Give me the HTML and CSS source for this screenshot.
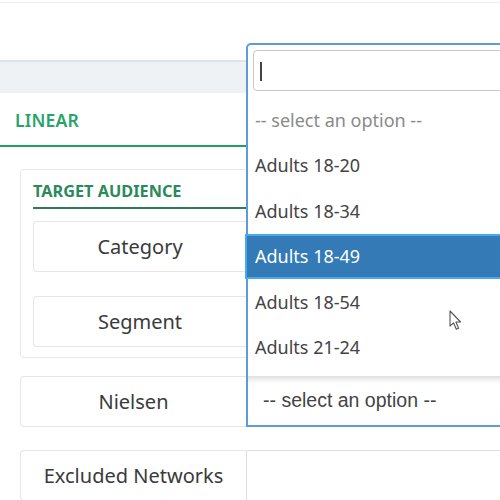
FILE: index.html
```html
<!DOCTYPE html>
<html>
<head>
<meta charset="utf-8">
<link rel="stylesheet" href="styles.css">
</head>
<body>
<div class="page">
  <div class="topbar"></div>
  <div class="band"></div>
  <div class="tabs"><div class="tab">LINEAR</div></div>
  <div class="content">
    <div class="card">
      <div class="card-title">TARGET AUDIENCE</div>
      <div class="row">
        <div class="label">Category</div>
        <div class="field"></div>
      </div>
      <div class="row">
        <div class="label">Segment</div>
        <div class="field"></div>
      </div>
    </div>
    <div class="row outer">
      <div class="label">Nielsen</div>
      <div class="field select-open">
        <span class="sel-text">-- select an option --</span>
        <div class="dropdown">
          <div class="search"><span class="caret"></span></div>
          <ul class="options">
            <li class="placeholder">-- select an option --</li>
            <li>Adults 18-20</li>
            <li>Adults 18-34</li>
            <li class="active">Adults 18-49</li>
            <li>Adults 18-54</li>
            <li>Adults 21-24</li>
          </ul>
          <svg class="pointer" width="14" height="22" viewBox="0 0 14 22">
            <path d="M1 1 L1 16 L4.5 12.8 L7.3 19.3 L9.6 18.3 L6.9 12 L11.6 12 Z" fill="#fff" stroke="#555" stroke-width="1.1" stroke-linejoin="round"/>
          </svg>
        </div>
      </div>
    </div>
    <div class="row outer">
      <div class="label">Excluded Networks</div>
      <div class="field plain"></div>
    </div>
  </div>
</div>
</body>
</html>
```

FILE: styles.css
```css
html, body {
  margin: 0;
  padding: 0;
  overflow: hidden;
  background: #fff;
}
.page {
  width: 760px;
  height: 500px;
  font-family: "Noto Sans", "Open Sans", sans-serif;
  color: #333;
}
.topbar {
  height: 2px;
  border-bottom: 1px solid #eceeef;
}
.band {
  margin-top: 57px;
  height: 31px;
  background: #eef2f5;
  border-top: 2px solid #e1e4e6;
}
.tabs {
  height: 52px;
  border-bottom: 2px solid #22a061;
  display: flex;
  align-items: center;
}
.tab {
  padding-left: 15px;
  font-size: 17.5px;
  font-weight: 600;
  color: #27a46a;
  letter-spacing: 0.2px;
  margin-top: 2px;
}
.content {
  padding: 22px 0 0 20px;
  display: flex;
  flex-direction: column;
  gap: 18px;
}
.card {
  border: 1px solid #e8e8e8;
  border-radius: 4px;
  padding: 11px 12px 10px 12px;
  display: flex;
  flex-direction: column;
  gap: 24px;
}
.card-title {
  font-size: 16.3px;
  line-height: 21px;
  font-weight: 700;
  color: #2b8a5c;
  padding-bottom: 5px;
  border-bottom: 2px solid #2e7d58;
  margin-bottom: -12px;
  width: 213px;
  white-space: nowrap;
}
.row {
  display: flex;
  height: 51px;
}
.label {
  box-sizing: border-box;
  width: 213px;
  flex: none;
  border: 1px solid #e6e6e6;
  border-right: none;
  border-radius: 4px 0 0 4px;
  display: flex;
  align-items: center;
  justify-content: center;
  font-size: 20px;
  color: #3a3a3a;
}
.outer .label {
  width: 226px;
}
.outer + .outer {
  margin-top: 5px;
}
.field {
  flex: 1;
  box-sizing: border-box;
  border: 1px solid #e0e0e0;
}
.field.plain {
  border-radius: 0 4px 4px 0;
}
.select-open {
  position: relative;
  border: 2px solid #5c9dd8;
  border-top: none;
  box-shadow: inset 0 7px 7px -5px rgba(0, 0, 0, 0.18);
  display: flex;
  align-items: center;
  padding-left: 15px;
}
.sel-text {
  font-family: "Liberation Sans", Arial, sans-serif;
  font-size: 19.5px;
  color: #444;
}
.dropdown {
  position: absolute;
  left: -2px;
  right: -2px;
  bottom: 100%;
  height: 333px;
  box-sizing: border-box;
  border: 2px solid #5c9dd8;
  border-bottom: none;
  border-radius: 5px 5px 0 0;
  background: #fff;
  padding: 5px 0 0 0;
}
.search {
  margin: 0 0 0 5px;
  height: 41px;
  box-sizing: border-box;
  border: 1px solid #c8c8c8;
  border-radius: 4px;
  position: relative;
}
.caret {
  position: absolute;
  left: 6px;
  top: 11px;
  width: 2px;
  height: 19px;
  background: #444;
}
.options {
  list-style: none;
  margin: 6px 0 0 0;
  padding: 0;
}
.options li {
  height: 45.5px;
  box-sizing: border-box;
  display: flex;
  align-items: center;
  padding-left: 7px;
  font-size: 18px;
  color: #444;
  white-space: nowrap;
}
.options li.placeholder {
  color: #8a8a8a;
}
.options li.active {
  background: #337ab7;
  color: #fff;
  border: 2px solid #4aa9ec;
  margin-left: -3px;
  padding-left: 8px;
}
.pointer {
  position: absolute;
  left: 201px;
  top: 265px;
}
```
